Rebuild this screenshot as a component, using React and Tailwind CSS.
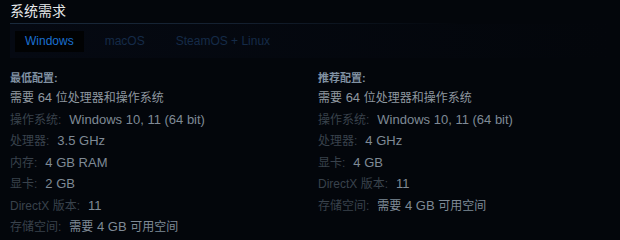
const minimum = [
  ['操作系统:', 'Windows 10, 11 (64 bit)'],
  ['处理器:', '3.5 GHz'],
  ['内存:', '4 GB RAM'],
  ['显卡:', '2 GB'],
  ['DirectX 版本:', '11'],
  ['存储空间:', '需要 4 GB 可用空间'],
]

const recommended = [
  ['操作系统:', 'Windows 10, 11 (64 bit)'],
  ['处理器:', '4 GHz'],
  ['显卡:', '4 GB'],
  ['DirectX 版本:', '11'],
  ['存储空间:', '需要 4 GB 可用空间'],
]

// CJK runs render a bit narrower than the latin text around them
const Mixed = ({ text }) =>
  text.split(/([\u3400-\u9fff]+)/).map((part, i) =>
    /[\u3400-\u9fff]/.test(part) ? (
      <span key={i} className="text-[12px]">{part}</span>
    ) : (
      part
    )
  )

const SpecColumn = ({ title, rows }) => (
  <div>
    <div className="text-[11px] font-bold leading-[14px] text-[#8091a2]">{title}</div>
    <div className="mt-[2px] h-[21.5px] text-[13px] leading-[21.5px] text-[#8f98a0]">
      <Mixed text="需要 64 位处理器和操作系统" />
    </div>
    {rows.map(([label, value]) => (
      <div key={label} className="h-[21.5px] text-[13px] leading-[21.5px]">
        <span className="text-[12px] text-[#39424c]">{label}</span>
        <span className="ml-[8px] text-[#7f8a96]">
          <Mixed text={value} />
        </span>
      </div>
    ))}
  </div>
)

export default function App() {
  return (
    <div
      className="h-[240px] w-[620px] overflow-hidden bg-[#03060b] px-[10px]"
      style={{ fontFamily: '"Liberation Sans", Arial, "Noto Sans CJK SC", sans-serif' }}
    >
      <div className="pt-[2px] text-[14px] leading-[18px] text-[#e6e8ea]">系统需求</div>
      <div className="mt-[3px] h-px w-[450px] bg-gradient-to-r from-[#1a2a3c] via-[#142030] to-transparent" />
      <div className="flex h-[34px] items-center bg-gradient-to-r from-[#050912] to-transparent pl-[5px] text-[12px]">
        <div className="flex h-[21px] items-center bg-[#010203] px-[10px] text-[#1a6fd0]">Windows</div>
        <div className="ml-[11px] px-[10px] text-[#152b48]">macOS</div>
        <div className="ml-[11px] px-[10px] text-[#152b48]">SteamOS + Linux</div>
      </div>
      <div className="mt-[13px] flex">
        <div className="w-[308px]">
          <SpecColumn title="最低配置:" rows={minimum} />
        </div>
        <div className="flex-1">
          <SpecColumn title="推荐配置:" rows={recommended} />
        </div>
      </div>
    </div>
  )
}
